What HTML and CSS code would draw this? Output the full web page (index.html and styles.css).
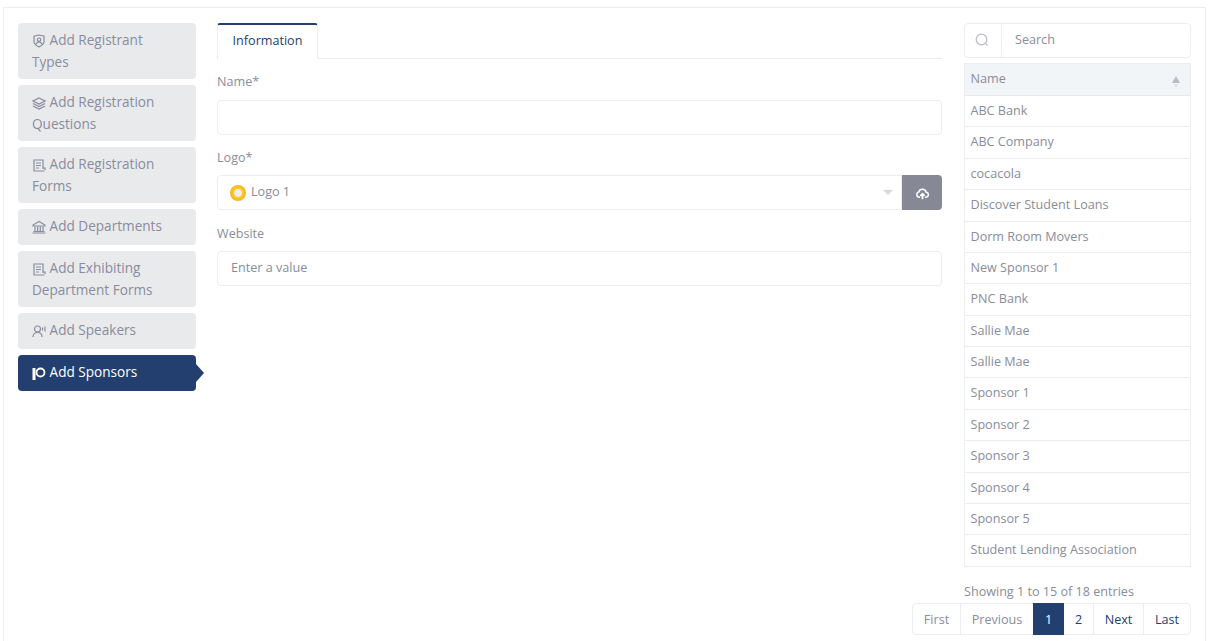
FILE: index.html
```html
<!DOCTYPE html>
<html lang="en">
    <head>
        <meta charset="UTF-8">
        <title>Add Sponsors</title>
        <link rel="stylesheet" href="styles.css">
    </head>
    <body>
        <div class="cartao">
            <!-- menu -->
            <div class="menu">
                <a class="passo">
                    <svg class="icone" viewBox="0 0 14 14"><path d="M7 1l5 1.200v5.300c0 2.500-2.500 4.200-5 5.500-2.500-1.300-5-3-5-5.500V2.200z"/><circle cx="7" cy="5.700" r="1.700"/><path d="M4.300 10c.5-1.500 1.500-2.200 2.700-2.200s2.200.7 2.700 2.200"/></svg>
                    Add Registrant Types
                </a>
                <a class="passo">
                    <svg class="icone" viewBox="0 0 14 14"><path d="M7 2l6 3-6 3-6-3z"/><path d="M1 7.500l6 3 6-3"/><path d="M1 10l6 3 6-3"/></svg>
                    Add Registration Questions
                </a>
                <a class="passo">
                    <svg class="icone" viewBox="0 0 14 14"><path d="M11 11V2H2v11h10.500"/><path d="M4 5h5M4 7.500h5M4 10h3"/><path d="M11 10h2v2"/></svg>
                    Add Registration Forms
                </a>
                <a class="passo">
                    <svg class="icone" viewBox="0 0 14 14"><path d="M7 1.500L1 5v1h12V5z"/><path d="M3 6.500V11M5.700 6.500V11M8.300 6.500V11M11 6.500V11"/><path d="M1.500 11.500h11M.5 13h13"/></svg>
                    Add Departments
                </a>
                <a class="passo">
                    <svg class="icone" viewBox="0 0 14 14"><path d="M11 11V2H2v11h10.500"/><path d="M4 5h5M4 7.500h5M4 10h3"/><path d="M11 10h2v2"/></svg>
                    Add Exhibiting Department Forms
                </a>
                <a class="passo">
                    <svg class="icone" viewBox="0 0 14 14"><circle cx="5.500" cy="5" r="3"/><path d="M1 13c0-2.800 2-4.500 4.500-4.500S10 10.200 10 13"/><path d="M10.500 3.500v3M13 2.500v5"/></svg>
                    Add Speakers
                </a>
                <a class="passo ativo">
                    <svg class="icone" viewBox="0 0 14 14"><rect class="mastro" x="0.500" y="2" width="3" height="12"/><circle cx="8.500" cy="6.500" r="4"/></svg>
                    Add Sponsors
                </a>
            </div>

            <!-- formulario -->
            <div class="centro">
                <div class="abas">
                    <div class="aba">Information</div>
                </div>
                <form action="">
                    <label class="rotulo" for="idNome">Name*</label>
                    <input class="campo" type="text" id="idNome">

                    <label class="rotulo">Logo*</label>
                    <div class="linha-logo">
                        <div class="campo seletor">
                            <span class="moeda"></span>
                            <span class="seletor-texto">Logo 1</span>
                            <span class="seta"></span>
                        </div>
                        <button class="enviar" type="button">
                            <svg viewBox="0 0 16 16" width="13" height="13"><path class="nuvem" d="M5 12.500H4a3.200 3.200 0 0 1-.6-6.300 4.700 4.700 0 0 1 9.100.3 3 3 0 0 1-.5 6H11"/><path class="flecha" d="M8 15V9M5.300 11L8 8.300l2.700 2.700"/></svg>
                        </button>
                    </div>

                    <label class="rotulo rotulo-site" for="idSite">Website</label>
                    <input class="campo campo-site" type="text" id="idSite" placeholder="Enter a value">
                </form>
            </div>

            <!-- lista -->
            <div class="direita">
                <div class="busca">
                    <span class="busca-icone">
                        <svg viewBox="0 0 14 14" width="14" height="14"><circle cx="6.500" cy="6.500" r="5.300"/><path d="M11 11l1.500 1.500"/></svg>
                    </span>
                    <span class="busca-texto">Search</span>
                </div>
                <div class="tabela">
                    <div class="cabecalho">Name<span class="ordem"></span></div>
                    <div class="item">ABC Bank</div>
                    <div class="item">ABC Company</div>
                    <div class="item">cocacola</div>
                    <div class="item">Discover Student Loans</div>
                    <div class="item">Dorm Room Movers</div>
                    <div class="item">New Sponsor 1</div>
                    <div class="item">PNC Bank</div>
                    <div class="item">Sallie Mae</div>
                    <div class="item">Sallie Mae</div>
                    <div class="item">Sponsor 1</div>
                    <div class="item">Sponsor 2</div>
                    <div class="item">Sponsor 3</div>
                    <div class="item">Sponsor 4</div>
                    <div class="item">Sponsor 5</div>
                    <div class="item">Student Lending Association</div>
                </div>
                <div class="info">Showing 1 to 15 of 18 entries</div>
                <div class="paginas">
                    <a class="pagina pag-primeira">First</a>
                    <a class="pagina pag-anterior">Previous</a>
                    <a class="pagina atual">1</a>
                    <a class="pagina pag-numero escura">2</a>
                    <a class="pagina pag-proxima escura">Next</a>
                    <a class="pagina pag-ultima escura">Last</a>
                </div>
            </div>
        </div>
    </body>
</html>
```

FILE: styles.css
```css
*{
    margin: 0;
    padding: 0;
    box-sizing: border-box;
}
html, body{
    height: 641px;
    overflow: hidden;
}
body{
    background-color: #fff;
    font-family: "Open Sans", sans-serif;
    font-size: 12.600px;
    color: #8a8c9c;
    padding: 7px 8px 0 3px;
}
.cartao{
    display: flex;
    height: 634px;
    overflow: hidden;
    border: 1px solid #ebedf2;
    border-bottom: none;
    padding: 15px 14px 0 14px;
}
.menu{
    width: 178px;
    flex: none;
    display: flex;
    flex-direction: column;
    gap: 6px;
}
.passo{
    position: relative;
    display: block;
    min-height: 36px;
    background-color: #e9eaec;
    border-radius: 4px;
    padding: 6.300px 24px 6.900px 14px;
    font-size: 13.600px;
    line-height: 21.400px;
    color: #8a8c9c;
}
.passo.ativo{
    background-color: #223f70;
    color: #fff;
}
.passo.ativo::after{
    content: "";
    position: absolute;
    left: 100%;
    top: 9px;
    border-left: 8px solid #223f70;
    border-top: 9px solid transparent;
    border-bottom: 9px solid transparent;
}
.icone{
    width: 14px;
    height: 14px;
    vertical-align: -3px;
    fill: none;
    stroke: currentColor;
    stroke-width: 1.200;
}
.ativo .icone{
    stroke-width: 1.800;
}
.mastro{
    fill: #fff;
    stroke: none;
}
.centro{
    width: 725px;
    flex: none;
    margin-left: 21px;
}
.abas{
    height: 36px;
    border-bottom: 1px solid #ebedf2;
}
.aba{
    width: 101px;
    height: 36px;
    background-color: #fff;
    border: 1px solid #ebedf2;
    border-top: 2px solid #223f70;
    border-bottom: none;
    border-radius: 3px 3px 0 0;
    text-align: center;
    line-height: 32px;
    color: #223f70;
}
.rotulo{
    display: block;
    margin-top: 13px;
    line-height: 19px;
}
.rotulo-site{
    margin-top: 14px;
}
.campo{
    display: block;
    width: 100%;
    height: 35px;
    margin-top: 9px;
    border: 1px solid #ebedf2;
    border-radius: 4px;
    padding: 0 13px 3px;
    font-family: inherit;
    font-size: 12.600px;
    color: #8a8c9c;
    background-color: #fff;
    outline: none;
}
.campo-site{
    margin-top: 8px;
}
.campo::placeholder{
    color: #8a8c9c;
    opacity: 1;
}
.linha-logo{
    display: flex;
    margin-top: 8px;
}
.seletor{
    display: flex;
    align-items: center;
    margin-top: 0;
    flex: 1;
    padding-left: 12px;
    padding-right: 8px;
    border-radius: 4px 0 0 4px;
}
.moeda{
    width: 16px;
    height: 16px;
    border-radius: 50%;
    background: radial-gradient(circle, #f1efe6 0 30%, #fcc930 40%, #f0a00a 100%);
    margin: 3px 5px 0 0;
}
.seletor-texto{
    flex: 1;
}
.seta{
    border-top: 5px solid #d8d9df;
    border-left: 5px solid transparent;
    border-right: 5px solid transparent;
    margin-top: 3px;
}
.enviar{
    width: 40px;
    height: 35px;
    flex: none;
    display: flex;
    align-items: center;
    justify-content: center;
    padding-top: 2px;
    border: none;
    border-radius: 0 4px 4px 0;
    background-color: #868895;
}
.enviar svg{
    fill: none;
    stroke: #fff;
}
.nuvem{
    stroke-width: 1.800;
}
.flecha{
    stroke-width: 2.200;
}
.direita{
    width: 227px;
    flex: none;
    margin-left: 22px;
}
.busca{
    display: flex;
    height: 35px;
    border: 1px solid #ebedf2;
    border-radius: 4px;
    align-items: stretch;
}
.busca-icone{
    width: 37px;
    display: flex;
    align-items: center;
    justify-content: center;
    padding: 0 2px 2px 0;
    border-right: 1px solid #ebedf2;
}
.busca-icone svg{
    fill: none;
    stroke: #b9bbc6;
    stroke-width: 1.200;
}
.busca-texto{
    padding-left: 13px;
    line-height: 31px;
}
.tabela{
    margin-top: 5px;
    border: 1px solid #ebedf2;
    border-bottom: none;
}
.cabecalho{
    position: relative;
    height: 32px;
    padding-left: 5.500px;
    line-height: 29px;
    background-color: #f2f5f8;
    border-bottom: 1px solid #e6e8ee;
}
.ordem{
    position: absolute;
    right: 10px;
    top: 12px;
    border-bottom: 7px solid #b9bbc6;
    border-left: 4px solid transparent;
    border-right: 4px solid transparent;
}
.ordem::after{
    content: "";
    position: absolute;
    left: -3px;
    top: 8px;
    border-top: 4px solid #e3e5ea;
    border-left: 3px solid transparent;
    border-right: 3px solid transparent;
}
.item{
    height: 31.380px;
    padding-left: 5.500px;
    line-height: 29px;
    border-bottom: 1px solid #ebedf2;
    white-space: nowrap;
}
.info{
    margin-top: 15.500px;
    line-height: 19px;
}
.paginas{
    display: flex;
    width: 279px;
    height: 32px;
    margin-left: -52px;
    margin-top: 2px;
    border: 1px solid #ebedf2;
    border-radius: 4px;
}
.pagina{
    display: flex;
    align-items: center;
    justify-content: center;
    border-right: 1px solid #ebedf2;
    flex: none;
}
.pag-primeira{
    width: 48px;
}
.pag-anterior{
    width: 72px;
    border-right: none;
}
.atual{
    width: 31px;
    background-color: #223f70;
    color: #fff;
    margin: -1px 0;
    border-right: none;
}
.pag-numero{
    width: 30px;
}
.pag-proxima{
    width: 50px;
}
.pag-ultima{
    width: 46px;
    border-right: none;
}
.escura{
    color: #223f70;
}
```
